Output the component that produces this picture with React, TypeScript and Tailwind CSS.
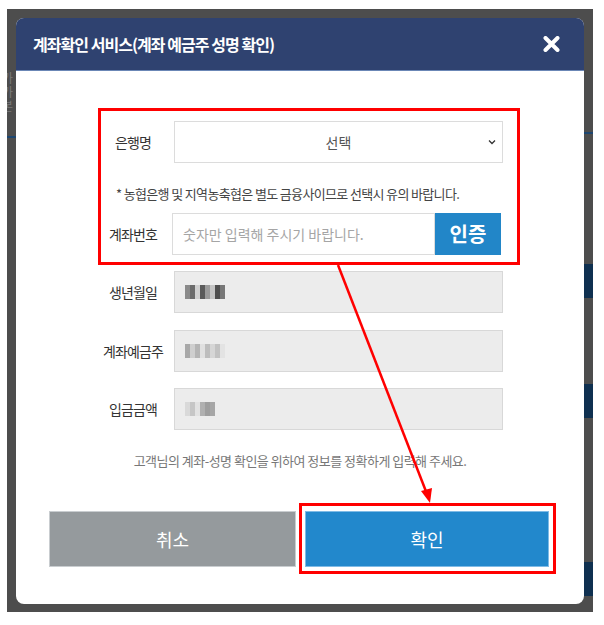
import React from 'react';

const FONT = "font-['Noto_Sans_CJK_KR','Noto_Sans',sans-serif]";

function Mosaic({ cells }: { cells: string[] }) {
  return (
    <div className="flex h-[14px]">
      {cells.map((c, i) => (
        <div key={i} className={`w-[5px] h-full ${c}`} />
      ))}
    </div>
  );
}

function LabeledRow({ label, children }: { label: string; children: React.ReactNode }) {
  return (
    <div className="flex items-center">
      <div className="w-[74px] text-center text-[14px] text-[#333] tracking-[-0.06em]">{label}</div>
      <div className="ml-[4px] flex-1">{children}</div>
    </div>
  );
}

function ReadonlyBox({ children }: { children: React.ReactNode }) {
  return (
    <div className="h-[42px] w-[329px] bg-[#ececec] border border-[#d8d8d8] flex items-center pl-[10px]">
      {children}
    </div>
  );
}

export default function App() {
  return (
    <div className={`relative w-[604px] h-[625px] bg-white pt-[9px] pl-[7px] ${FONT}`}>
      {/* dimmed page */}
      <div className="w-[586px] h-[603px] bg-[#4d4d4d] flex pt-[9px]">
        {/* left edge of page behind */}
        <div className="w-[9px] overflow-hidden flex flex-col">
          <div className="mt-[53px] -ml-[5px] text-[12px] leading-[14px] text-[#7a7a7a]">
            <div>카</div>
            <div>카</div>
            <div>본</div>
          </div>
          <div className="mt-[23px] h-[2px] bg-[#1d4670]" />
        </div>

        {/* modal */}
        <div className="w-[568px] h-[586px] rounded-[8px] bg-white overflow-hidden flex flex-col">
          <div className="h-[53px] shrink-0 bg-[#2f4270] border-b border-[#6b87b6] flex items-center justify-between pl-[17px] pr-[24px]">
            <span className="text-white text-[16px] font-bold tracking-[-0.06em]">계좌확인 서비스(계좌 예금주 성명 확인)</span>
            <svg width="17" height="16" viewBox="0 0 17 16">
              <path d="M2.5 2 L14.5 14 M14.5 2 L2.5 14" stroke="white" strokeWidth="4" strokeLinecap="round" />
            </svg>
          </div>

          <div className="relative flex-1 flex flex-col">
            <div className="ml-[80px] w-[407px] pt-[50px] flex flex-col">
              <LabeledRow label="은행명">
                <div className="relative h-[42px] w-[329px] bg-white border border-[#dcdcdc] flex items-center justify-center text-[14px] text-[#555]">
                  선택
                  <svg className="absolute right-[6px] top-[17px]" width="8" height="6" viewBox="0 0 8 6">
                    <path d="M1 1.5 L4 4.5 L7 1.5" stroke="#333" strokeWidth="1.3" fill="none" />
                  </svg>
                </div>
              </LabeledRow>

              <div className="mt-[21px] pl-[20px] h-[20px] leading-[20px] text-[13px] text-[#444] tracking-[-0.05em]">
                * 농협은행 및 지역농축협은 별도 금융사이므로 선택시 유의 바랍니다.
              </div>

              <div className="mt-[9px] flex items-center">
                <div className="w-[74px] text-center text-[14px] text-[#333] tracking-[-0.06em]">계좌번호</div>
                <div className="ml-[2px] flex h-[42px]">
                  <input
                    className="w-[263px] h-full border border-[#dcdcdc] pl-[10px] text-[14px] outline-none placeholder:text-[#a5a5a5]"
                    placeholder="숫자만 입력해 주시기 바랍니다."
                  />
                  <button className="w-[66px] h-full bg-[#2286c8] text-white text-[20px] font-bold">인증</button>
                </div>
              </div>

              <div className="mt-[16px]">
                <LabeledRow label="생년월일">
                  <ReadonlyBox>
                    <Mosaic cells={['bg-[#8a8a8a]', 'bg-[#6b6b6b]', 'bg-[#d0d0d0]', 'bg-[#5a5a5a]', 'bg-[#9a9a9a]', 'bg-[#c4c4c4]', 'bg-[#4e4e4e]', 'bg-[#777]']} />
                  </ReadonlyBox>
                </LabeledRow>
              </div>

              <div className="mt-[17px]">
                <LabeledRow label="계좌예금주">
                  <ReadonlyBox>
                    <Mosaic cells={['bg-[#a8a8a8]', 'bg-[#cfcfcf]', 'bg-[#b5b5b5]', 'bg-[#e0e0e0]', 'bg-[#bdbdbd]', 'bg-[#d6d6d6]', 'bg-[#c2c2c2]', 'bg-[#e3e3e3]']} />
                  </ReadonlyBox>
                </LabeledRow>
              </div>

              <div className="mt-[16px]">
                <LabeledRow label="입금금액">
                  <ReadonlyBox>
                    <Mosaic cells={['bg-[#d9d9d9]', 'bg-[#c6c6c6]', 'bg-[#e2e2e2]', 'bg-[#b0b0b0]', 'bg-[#9e9e9e]', 'bg-[#a6a6a6]']} />
                  </ReadonlyBox>
                </LabeledRow>
              </div>
            </div>

            <div className="mt-[21px] h-[20px] leading-[20px] text-center text-[13px] text-[#777] tracking-[-0.04em]">
              고객님의 계좌-성명 확인을 위하여 정보를 정확하게 입력해 주세요.
            </div>

            <div className="mt-[40px] pl-[33px] pr-[35px] flex gap-[9px]">
              <button className="w-[247px] h-[56px] bg-[#959a9d] border border-[#c9cdd0] text-white text-[18px]">취소</button>
              <button className="flex-1 h-[56px] bg-[#2288cc] border border-[#7fbbe6] text-white text-[18px]">확인</button>
            </div>

            {/* annotation boxes */}
            <div className="absolute left-[82px] top-[37px] w-[422px] h-[157px] border-[3px] border-[#ff0000]" />
            <div className="absolute left-[283px] top-[432px] w-[257px] h-[71px] border-[3px] border-[#ff0000]" />
          </div>
        </div>

        {/* right edge of page behind */}
        <div className="w-[9px] flex flex-col">
          <div className="mt-[114px] h-[2px] bg-[#1d4670]" />
          <div className="mt-[130px] h-[34px] bg-[#0f3050]" />
          <div className="mt-[86px] h-[34px] bg-[#0f3050]" />
          <div className="mt-[144px] h-[34px] bg-[#0f3050]" />
        </div>
      </div>

      {/* annotation arrow */}
      <svg className="absolute left-0 top-0 pointer-events-none" width="604" height="625" viewBox="0 0 604 625">
        <line x1="338" y1="265" x2="427" y2="494" stroke="#ff0000" strokeWidth="2.5" />
        <path d="M430 503 L421 491 L432 488 Z" fill="#ff0000" />
      </svg>
    </div>
  );
}
